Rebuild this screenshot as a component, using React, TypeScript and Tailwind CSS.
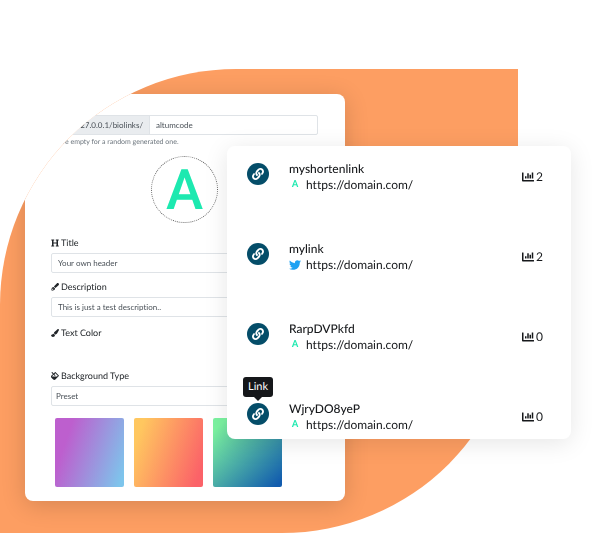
import type { ReactNode } from "react";
import {
  FaChartBar,
  FaFill,
  FaHeading,
  FaLink,
  FaPaintBrush,
  FaPenFancy,
  FaTwitter,
} from "react-icons/fa";

type ShortLink = { name: string; url: string; site: "altum" | "twitter"; clicks: number };

const links: ShortLink[] = [
  { name: "myshortenlink", url: "https://domain.com/", site: "altum", clicks: 2 },
  { name: "mylink", url: "https://domain.com/", site: "twitter", clicks: 2 },
  { name: "RarpDVPkfd", url: "https://domain.com/", site: "altum", clicks: 0 },
  { name: "WjryDO8yeP", url: "https://domain.com/", site: "altum", clicks: 0 },
];

const presets = [
  { name: "Purple to sky", style: "bg-[linear-gradient(109deg,#bd5fce_20%,#7dc5ec_95%)]" },
  { name: "Amber to coral", style: "bg-[linear-gradient(109deg,#ffc75f_11%,#fb6268_91%)]" },
  { name: "Mint to blue", style: "bg-[linear-gradient(135deg,#7bf2a0_10%,#125cae_95%)]" },
];

const fieldStyle =
  "block h-5 w-full rounded-xs border border-[#dfe3e7] bg-white text-[8px] leading-3 text-[#495057] outline-none";

function FieldLabel({ id, icon, children }: { id: string; icon: ReactNode; children: ReactNode }) {
  return (
    <label htmlFor={id} className="flex h-3 items-center gap-0.5 text-[9px] leading-3 text-[#212529]">
      {icon}
      {children}
    </label>
  );
}

function BiolinkForm() {
  return (
    <form className="mr-[173px] ml-[25px] rounded-lg bg-white pt-[21px] pr-[27px] pb-[14px] pl-[26px] shadow-[0_4px_24px_rgba(0,0,0,0.16)]">
      <div className="flex h-5 overflow-hidden rounded-xs border border-[#dfe3e7]">
        <label
          htmlFor="slug"
          className="flex w-[98px] items-center justify-end border-r border-[#dfe3e7] bg-[#e9ecef] pr-1.5 text-[8px] text-[#495057]"
        >
          http://127.0.0.1/biolinks/
        </label>
        <input
          id="slug"
          defaultValue="altumcode"
          className="min-w-0 flex-1 px-1.5 text-[8px] text-[#495057] outline-none"
        />
      </div>
      <p className="mt-0.5 text-[7px] leading-[10px] text-[#6c757d]">
        Leave empty for a random generated one.
      </p>

      <div className="mx-auto mt-[9px] flex size-[67px] items-center justify-center rounded-full border border-dotted border-[#666] font-['Roboto',sans-serif] text-[56px] leading-none font-medium text-[#1de9b0]">
        A
      </div>

      <div className="mt-[14px]">
        <FieldLabel id="title" icon={<FaHeading className="size-2" />}>Title</FieldLabel>
        <input id="title" defaultValue="Your own header" className={`${fieldStyle} mt-1 px-1.5`} />
      </div>
      <div className="mt-2">
        <FieldLabel id="description" icon={<FaPenFancy className="size-2" />}>Description</FieldLabel>
        <input
          id="description"
          defaultValue="This is just a test description.."
          className={`${fieldStyle} mt-1 px-1.5`}
        />
      </div>
      <div className="mt-2.5 flex h-[35px] items-start">
        <FieldLabel id="text-color" icon={<FaPaintBrush className="size-2" />}>Text Color</FieldLabel>
        <input id="text-color" type="color" defaultValue="#ffffff" className="size-4 opacity-0" />
      </div>
      <div className="mt-2">
        <FieldLabel id="background" icon={<FaFill className="size-2" />}>Background Type</FieldLabel>
        <select id="background" className={`${fieldStyle} mt-1 appearance-none px-1`}>
          <option>Preset</option>
        </select>
      </div>
      <div className="mt-3 flex gap-2.5 pl-1">
        {presets.map((preset) => (
          <button
            key={preset.name}
            type="button"
            aria-label={preset.name}
            className={`size-[69px] shrink-0 rounded-xs ${preset.style}`}
          />
        ))}
      </div>
    </form>
  );
}

function LinkRow({ link, tooltip }: { link: ShortLink; tooltip?: string }) {
  return (
    <li className="flex h-10 items-center text-[12px] leading-4 text-[#16181b]">
      <span className="relative mb-1.5 flex size-[22px] items-center justify-center rounded-full bg-[#044d69] text-white">
        <FaLink className="size-3" />
        {tooltip && (
          <span
            role="tooltip"
            className="absolute bottom-full left-1/2 mb-1.5 flex h-5 w-[30px] -translate-x-1/2 items-center justify-center rounded-[3px] bg-[#15171a] text-[11px] text-white"
          >
            {tooltip}
            <span className="absolute top-full left-1/2 -translate-x-1/2 border-x-4 border-t-4 border-x-transparent border-t-[#15171a]" />
          </span>
        )}
      </span>
      <div className="ml-5 flex-1">
        <p className="font-medium">{link.name}</p>
        <p className="flex items-center gap-[5px]">
          {link.site === "twitter" ? (
            <FaTwitter className="size-3 text-[#1da1f2]" />
          ) : (
            <span className="w-3 text-center font-['Roboto',sans-serif] text-[10px] font-medium text-[#1de9b0]">
              A
            </span>
          )}
          <a href={link.url}>{link.url}</a>
        </p>
      </div>
      <span className="flex items-center gap-0.5">
        <FaChartBar className="size-3" />
        {link.clicks}
      </span>
    </li>
  );
}

export default function App() {
  return (
    <main className="relative min-h-screen overflow-hidden bg-white pt-[69px] font-['Lato',sans-serif] [font-variant-ligatures:none] [text-rendering:geometricPrecision]">
      <section className="isolate mr-[82px] overflow-hidden rounded-tl-[236px] rounded-br-[236px] will-change-transform">
        <div className="bg-[#fd9e62] pt-[25px] pb-8">
          <BiolinkForm />
        </div>
      </section>
      <ul className="absolute top-[146px] right-[29px] left-[227px] flex flex-col gap-10 rounded-lg bg-white pt-[11px] pr-7 pb-0.5 pl-5 shadow-[0_4px_24px_rgba(0,0,0,0.1)]">
        {links.map((link, index) => (
          <LinkRow key={link.name} link={link} tooltip={index === 3 ? "Link" : undefined} />
        ))}
      </ul>
    </main>
  );
}
